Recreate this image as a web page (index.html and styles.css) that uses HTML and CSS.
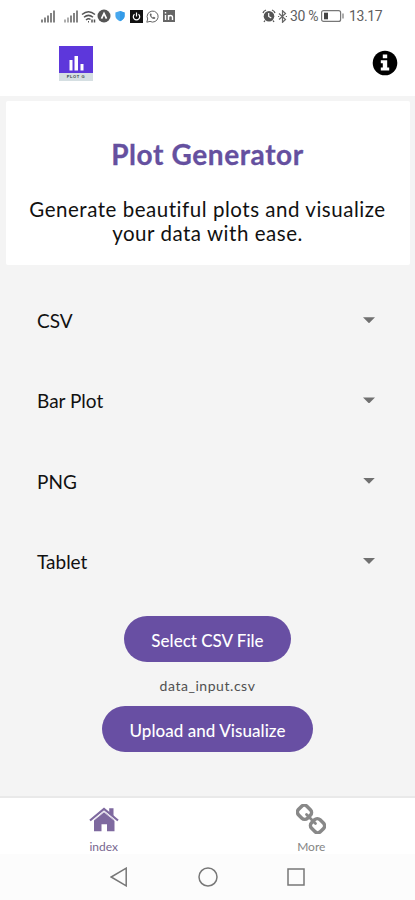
FILE: index.html
```
<!DOCTYPE html>
<html lang="en">
<head>
<meta charset="utf-8">
<title>Plot Generator</title>
<link rel="stylesheet" href="styles.css">
</head>
<body>
<div class="status">
  <div class="status-left">
    <svg class="signal" width="14" height="13" viewBox="0 0 14 13"><path d="M1 9.500v3M4 7.500v5M7 5.500v7M10 3v9.500M13 .5v12"/></svg>
    <svg class="signal second" width="14" height="13" viewBox="0 0 14 13"><path class="weak" d="M1 9.500v3M4 7.500v5"/><path d="M7 5.500v7M10 3v9.500M13 .5v12"/></svg>
    <svg class="wifi" width="15" height="13" viewBox="0 0 15 13"><path d="M1 4.500Q7.500-1 14 4.500M3 7.300Q7.500 3.500 12 7.300M5 10Q7.500 8 9.500 9.500"/><path d="M7 11.800h1M11 9.500v3M13.500 9.500v3"/></svg>
    <svg class="expo" width="14" height="14" viewBox="0 0 14 14"><circle cx="7" cy="7" r="6.500" fill="#555"/><path d="M4.500 9.700 7 4.500l2.500 5.200" fill="none" stroke="#fff" stroke-width="1.700"/></svg>
    <svg class="shield" width="10" height="12" viewBox="0 0 10 12"><path d="M5 1 9.600 2.500V6Q9.200 9.500 5 11.200Q.8 9.500.4 6V2.500Z" fill="#48a8ee"/><path d="M5 1 9.600 2.500V6Q9.200 9.500 5 11.200Z" fill="#349be8"/></svg>
    <svg class="power" width="13" height="13" viewBox="0 0 13 13"><path d="M0 0h13v13H0z" fill="#111"/><path d="M4.500 4.200a3.200 3.200 0 1 0 4 0M6.500 2.500v4" fill="none" stroke="#fff" stroke-width="1.200"/></svg>
    <svg class="chat" width="13" height="13" viewBox="0 0 13 13"><path d="M.8 12.200 1.700 9A5.500 5.500 0 1 1 4 11.400Z" fill="none" stroke="#666"/><path d="M4.300 3.500q-1.300 1 .2 3.200Q6.500 9.400 8.300 9q1.200-.5 1-1.500L7.700 6.800l-.8.800Q5.700 7 5.200 5.800l.6-.8-.6-1.500Z" fill="#666"/></svg>
    <svg class="linked" width="12" height="12" viewBox="0 0 12 12"><path d="M0 0h12v12H0z" fill="#666"/><path d="M2.500 5v5M2.500 2v1.500M5.500 10V5M5.500 7.500q0-2 2-2t2 2V10" fill="none" stroke="#fff" stroke-width="1.400"/></svg>
  </div>
  <div class="status-right">
    <svg width="14" height="14" viewBox="0 0 14 14"><circle cx="7" cy="7.300" r="5.300" fill="#555"/><path d="M1 4q.5-2 3-3M13 4q-.5-2-3-3M3 11.500 2 13M11 11.500l1 1.500" fill="none" stroke="#555" stroke-width="1.300"/><path d="M6.700 4v3.500l2.600 1.600" fill="none" stroke="#fff" stroke-width="1.200"/></svg>
    <svg class="bluetooth" width="9" height="13" viewBox="0 0 9 13"><path d="m1 3.500 6.500 6-3 2.800V.7l3 2.800-6.500 6" fill="none" stroke="#666" stroke-width="1.200"/><path d="M0 6h1.200v1H0zM7.800 6H9v1H7.800z" fill="#666"/></svg>
    <span class="percent">30 %</span>
    <svg class="battery" width="23" height="12" viewBox="0 0 23 12"><rect x=".6" y=".6" width="19" height="10.800" rx="2" fill="none" stroke="#777" stroke-width="1.200"/><path d="M3 2.700h4v6.600H3z" fill="#444"/><path d="M22 3.500v5" stroke="#777" stroke-width="1.200"/></svg>
    <span class="clock">13.17</span>
  </div>
</div>
<header>
  <div class="logo">
    <svg width="34" height="27" viewBox="0 0 34 27"><path d="M10.500 14h3v10.500h-3zM15.500 10h3.500v14.500h-3.500zM21.500 18h3v6.500h-3z" fill="#fff"/></svg>
    <span>PLOT G</span>
  </div>
  <svg class="info" width="26" height="26" viewBox="0 0 26 26"><circle cx="13" cy="13" r="12.300"/><path d="M10.800 4.500h4.400v3.700h-4.400zM8.800 10.200h6.400v7.300h2v3H8.800v-3h2v-4.300h-2z" fill="#fff"/></svg>
</header>
<main>
  <section class="hero">
    <h1>Plot Generator</h1>
    <p>Generate beautiful plots and visualize<br>your data with ease.</p>
  </section>
  <div class="pickers">
    <div class="picker"><span>CSV</span><i></i></div>
    <div class="picker"><span>Bar Plot</span><i></i></div>
    <div class="picker"><span>PNG</span><i></i></div>
    <div class="picker"><span>Tablet</span><i></i></div>
  </div>
  <div class="actions">
    <button class="select">Select CSV File</button>
    <div class="filename">data_input.csv</div>
    <button class="upload">Upload and Visualize</button>
  </div>
</main>
<nav class="tabs">
  <div class="tab active">
    <svg width="30" height="30" viewBox="0 0 30 30"><path d="M15 7.500 25.500 16v11.300H18v-7h-5.500v7H5V16Z"/><path d="M20.200 4.300h4.300v9l-4.300-3.500z"/><path d="M1 16.500 15 5l14 11.500" fill="none" stroke="#7e699f" stroke-width="2.200"/><path d="M3.500 17.300 15 8l11.500 9.300" fill="none" stroke="#fff" stroke-width=".7"/></svg>
    <span>index</span>
  </div>
  <div class="tab">
    <svg width="30" height="30" viewBox="0 0 30 30"><g fill="none" stroke="#888" stroke-width="3.500"><rect x="2.200" y="2.300" width="12.600" height="12" rx="4" transform="rotate(45 8.500 8.300)"/><rect x="15.200" y="15.700" width="12.600" height="12" rx="4" transform="rotate(45 21.500 21.700)"/><path d="m10.500 10.500 9 9" stroke-width="2.800" stroke-linecap="round"/></g></svg>
    <span>More</span>
  </div>
</nav>
<div class="system">
  <svg width="18" height="20" viewBox="0 0 18 20"><path d="M16.200 1.200v17.600L1.200 10Z"/></svg>
  <svg width="20" height="20" viewBox="0 0 20 20"><circle cx="10" cy="10" r="9"/></svg>
  <svg width="18" height="18" viewBox="0 0 18 18"><rect x="1" y="1" width="16" height="16"/></svg>
</div>
</body>
</html>
```
FILE: styles.css
```
* { box-sizing: border-box; }
body {
  margin: 0;
  width: 415px;
  height: 900px;
  overflow: hidden;
  display: flex;
  flex-direction: column;
  background: #f4f4f4;
  color: #111;
  font-family: Lato, "Noto Sans", sans-serif;
}
svg { display: block; flex: none; }
span { white-space: nowrap; }
.status {
  height: 32px;
  flex: none;
  background: #fff;
  display: flex;
  justify-content: space-between;
  padding: 0 34px 0 41px;
  color: #606060;
}
.status-left, .status-right { display: flex; align-items: center; }
.signal { fill: none; stroke: #666; stroke-width: 1.6; }
.signal .weak { stroke: #999; }
.second { margin-left: 9px; }
.wifi { margin-left: 3px; fill: none; stroke: #555; stroke-width: 1.5; }
.expo { margin-left: 1px; }
.shield { margin-left: 4px; }
.power { margin-left: 5px; }
.chat { margin-left: 3px; }
.linked { margin-left: 4px; }
.bluetooth { margin-left: 2px; }
.percent, .clock { font: 14px Roboto, sans-serif; }
.percent { width: 31px; margin-left: 3px; letter-spacing: -0.3px; }
.clock { width: 32px; margin-left: 5px; letter-spacing: -0.4px; }
header {
  height: 64px;
  flex: none;
  background: #fff;
  display: flex;
  justify-content: space-between;
  padding: 14px 17px 0 59px;
}
.logo { width: 34px; height: 35px; background: #5d37db; }
.logo span {
  display: block;
  height: 8px;
  background: #d5dfe2;
  color: #34434a;
  font: bold 4px/8px "Liberation Sans", sans-serif;
  letter-spacing: .6px;
  text-align: center;
}
.info { margin-top: 4px; }
main { flex: 1; }
.hero {
  margin: 5px 5.5px 0;
  height: 164px;
  background: #fff;
  border-radius: 2px;
  padding-top: 35px;
  text-align: center;
}
h1 { margin: 0; font-size: 28px; line-height: 36px; color: #65509f; letter-spacing: .6px; -webkit-text-stroke: .3px #65509f; }
p { margin: 25px 0 0; font-size: 20.5px; line-height: 24px; color: #111; letter-spacing: .53px; white-space: nowrap; }
.pickers { padding: 16px 40px 0 37px; }
.picker {
  height: 80.3px;
  display: flex;
  align-items: center;
  justify-content: space-between;
  font-size: 19px;
}
.picker span { margin-top: -1.4px; }
.picker i { width: 12px; height: 6px; background: #707070; clip-path: polygon(0 0, 100% 0, 50% 100%); margin-top: -2px; }
.actions { display: flex; flex-direction: column; align-items: center; padding-top: 14px; }
button {
  height: 46px;
  border: 0;
  border-radius: 23px;
  background: #684fa3;
  color: #fff;
  font: 500 17px Lato, sans-serif;
  padding: 3px 0 0;
}
.select { width: 167px; }
.upload { width: 211px; letter-spacing: .05px; }
.filename { height: 44px; line-height: 47px; font-size: 14px; color: #505050; letter-spacing: .55px; }
.tabs {
  height: 58px;
  flex: none;
  display: flex;
  background: #fff;
  border-top: 2px solid #e9e9e9;
}
.tab {
  flex: 1;
  display: flex;
  flex-direction: column;
  align-items: center;
  padding-top: 6px;
  font-size: 12px;
  color: #858585;
}
.tab svg { fill: #7e699f; }
.tab span { line-height: 16px; margin-top: 5px; letter-spacing: 0; }
.tab.active { color: #77678f; }
.system {
  height: 46px;
  flex: none;
  background: #fcfcfc;
  display: flex;
  justify-content: space-between;
  align-items: center;
  padding: 0 110px;
}
.system svg { fill: none; stroke: #777; stroke-width: 1.5; }
```
